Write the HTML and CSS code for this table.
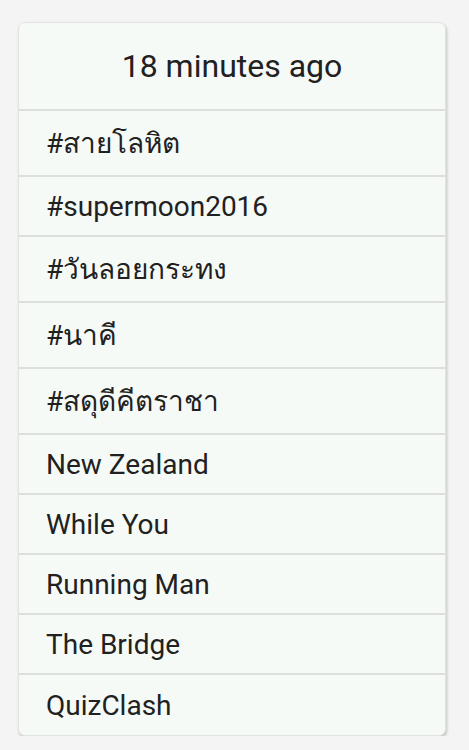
FILE: index.html
```html
<!DOCTYPE html>
<html lang="th">
<head>
    <meta charset="UTF-8">
    <meta name="viewport" content="width=device-width, initial-scale=1.0">
    <title>Trends</title>
    <link rel="stylesheet" href="styles.css">
</head>
<body>
    <div class="card">
        <div class="card-header">18 minutes ago</div>
        <ul class="trends">
            <li class="trend thai">#สายโลหิต</li>
            <li class="trend">#supermoon2016</li>
            <li class="trend thai">#วันลอยกระทง</li>
            <li class="trend thai">#นาคี</li>
            <li class="trend thai">#สดุดีคีตราชา</li>
            <li class="trend">New Zealand</li>
            <li class="trend">While You</li>
            <li class="trend">Running Man</li>
            <li class="trend">The Bridge</li>
            <li class="trend">QuizClash</li>
        </ul>
    </div>
</body>
</html>
```

FILE: styles.css
```css
body {
    margin: 0;
    padding: 22px 23px 0 18px;
    background: #f4f4f4;
    font-family: Roboto, "Noto Sans", sans-serif;
    color: #212121;
}
.card {
    background: #f6faf6;
    border: 1px solid #e2e4e2;
    border-radius: 7px;
    box-shadow: 1px 2px 3px rgba(0,0,0,0.2);
    overflow: hidden;
}
.card-header {
    height: 86px;
    display: flex;
    align-items: center;
    justify-content: center;
    font-size: 32px;
    border-bottom: 2px solid #dcdfdc;
}
.trends {
    list-style: none;
    margin: 0;
    padding: 0;
}
.trend {
    height: 58px;
    display: flex;
    align-items: center;
    padding-left: 27px;
    font-size: 28px;
    border-bottom: 2px solid #dcdfdc;
}
.trend.thai {
    height: 64px;
}
.trend:last-child {
    height: 60px;
    border-bottom: none;
}
```
